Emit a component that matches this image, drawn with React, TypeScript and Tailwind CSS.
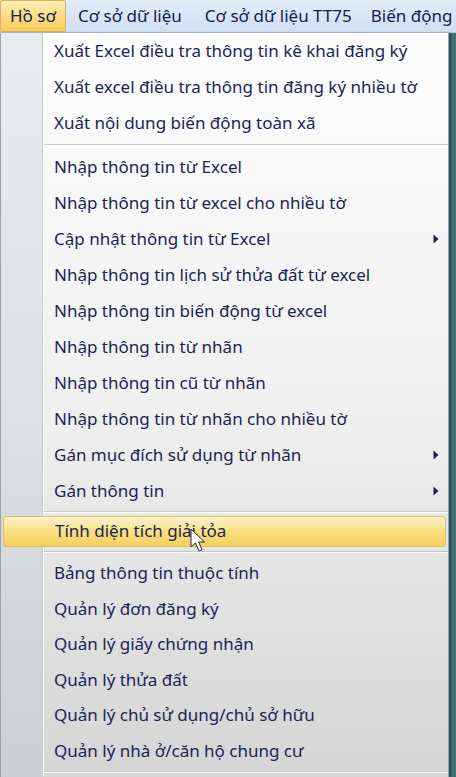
type Item = { label: string; sub?: boolean; active?: boolean; h?: string } | { sep: string };

const topMenus = [
  { label: "Hồ sơ", cls: "px-[9px] bg-gradient-to-b from-[#fdeeb5] via-[#fbdc85] to-[#f8cc5c] border border-[#d9b45a] rounded-t-[2px]" },
  { label: "Cơ sở dữ liệu", cls: "pl-[12px] pr-[11px]" },
  { label: "Cơ sở dữ liệu TT75", cls: "pl-[12px] pr-[9px]" },
  { label: "Biến động", cls: "pl-[10px] pr-[4px]" },
];

const items: Item[] = [
  { label: "Xuất Excel điều tra thông tin kê khai đăng ký" },
  { label: "Xuất excel điều tra thông tin đăng ký nhiều tờ" },
  { label: "Xuất nội dung biến động toàn xã" },
  { sep: "h-[8px]" },
  { label: "Nhập thông tin từ Excel" },
  { label: "Nhập thông tin từ excel cho nhiều tờ" },
  { label: "Cập nhật thông tin từ Excel", sub: true },
  { label: "Nhập thông tin lịch sử thửa đất từ excel" },
  { label: "Nhập thông tin biến động từ excel" },
  { label: "Nhập thông tin từ nhãn" },
  { label: "Nhập thông tin cũ từ nhãn" },
  { label: "Nhập thông tin từ nhãn cho nhiều tờ" },
  { label: "Gán mục đích sử dụng từ nhãn", sub: true },
  { label: "Gán thông tin", sub: true },
  { sep: "h-[5px]" },
  { label: "Tính diện tích giải tỏa", active: true },
  { sep: "h-[7px]" },
  { label: "Bảng thông tin thuộc tính", h: "h-[35.5px]" },
  { label: "Quản lý đơn đăng ký", h: "h-[35.5px]" },
  { label: "Quản lý giấy chứng nhận", h: "h-[35.5px]" },
  { label: "Quản lý thửa đất", h: "h-[35.5px]" },
  { label: "Quản lý chủ sử dụng/chủ sở hữu", h: "h-[35.5px]" },
  { label: "Quản lý nhà ở/căn hộ chung cư", h: "h-[35.5px]" },
  { sep: "h-[8px]" },
];

function Arrow() {
  return (
    <svg width="6" height="10" viewBox="0 0 6 10" className="absolute right-[9px] top-1/2 -translate-y-1/2">
      <path d="M0.5 0.5 L5.5 5 L0.5 9.5 Z" fill="#1b2150" />
    </svg>
  );
}

function Cursor() {
  return (
    <svg width="18" height="26" viewBox="0 0 18 26" className="absolute left-[190px] top-[528px]">
      <path
        d="M1 1 L1 19 L5.5 15 L9 23 L12 21.8 L8.7 14 L14.5 14 Z"
        fill="#ffffff"
        stroke="#2b2b2b"
        strokeWidth="1"
        strokeLinejoin="round"
      />
    </svg>
  );
}

function Gutter() {
  return (
    <div className="w-[43px] shrink-0 self-stretch flex">
      <div className="flex-1" />
      <div className="w-px bg-[#c5c9ce]" />
      <div className="w-px bg-white" />
    </div>
  );
}

export default function App() {
  return (
    <div
      className="relative w-[456px] h-[777px] overflow-hidden bg-[#3f6f73] flex flex-col"
      style={{ fontFamily: '"Noto Sans", "Open Sans", sans-serif' }}
    >
      {/* Menu bar */}
      <div className="h-[33px] flex items-stretch bg-gradient-to-b from-[#e3edf9] to-[#cfdff3] border-b border-[#b8c8de] text-[17px] text-[#15204d] shrink-0">
        {topMenus.map((m) => (
          <div key={m.label} className={`flex items-center whitespace-nowrap ${m.cls}`}>
            {m.label}
          </div>
        ))}
      </div>

      {/* Dropdown */}
      <div className="relative w-[449px] flex-1 border-l border-r border-[#9aa3ad] shadow-[2px_0_2px_rgba(0,0,0,0.35)]">
        <div className="absolute inset-0 bg-gradient-to-b from-[#fdfdfd] via-[#f0f0f0] to-[#d5d5d5]" />
        <div className="absolute left-0 top-0 bottom-0 w-[42px] bg-gradient-to-b from-[#e8ecf1] via-[#dde1e6] to-[#cbced2]" />
        <div className="relative flex flex-col text-[17px] text-[#1b2458]">
          {items.map((it, idx) =>
            "sep" in it ? (
              <div key={idx} className={`${it.sep} flex shrink-0`}>
                <Gutter />
                <div className="flex-1 flex flex-col justify-center">
                  <div className="h-px bg-[#c6c6c6]" />
                  <div className="h-px bg-white" />
                </div>
              </div>
            ) : it.active ? (
              <div key={idx} className="h-[34px] shrink-0 flex items-center px-[2px]">
                <div className="w-full h-[31px] rounded-[3px] border border-[#dfbf6a] bg-gradient-to-b from-[#fdf3c9] via-[#f9df82] to-[#f5cf5a] flex items-center pl-[51px] whitespace-nowrap">
                  {it.label}
                </div>
              </div>
            ) : (
              <div key={idx} className={`relative flex items-stretch whitespace-nowrap shrink-0 ${it.h ?? "h-[36px]"}`}>
                <Gutter />
                <div className="flex-1 flex items-center pl-[10px]">{it.label}</div>
                {it.sub && <Arrow />}
              </div>
            )
          )}
        </div>
      </div>
      <Cursor />
    </div>
  );
}
